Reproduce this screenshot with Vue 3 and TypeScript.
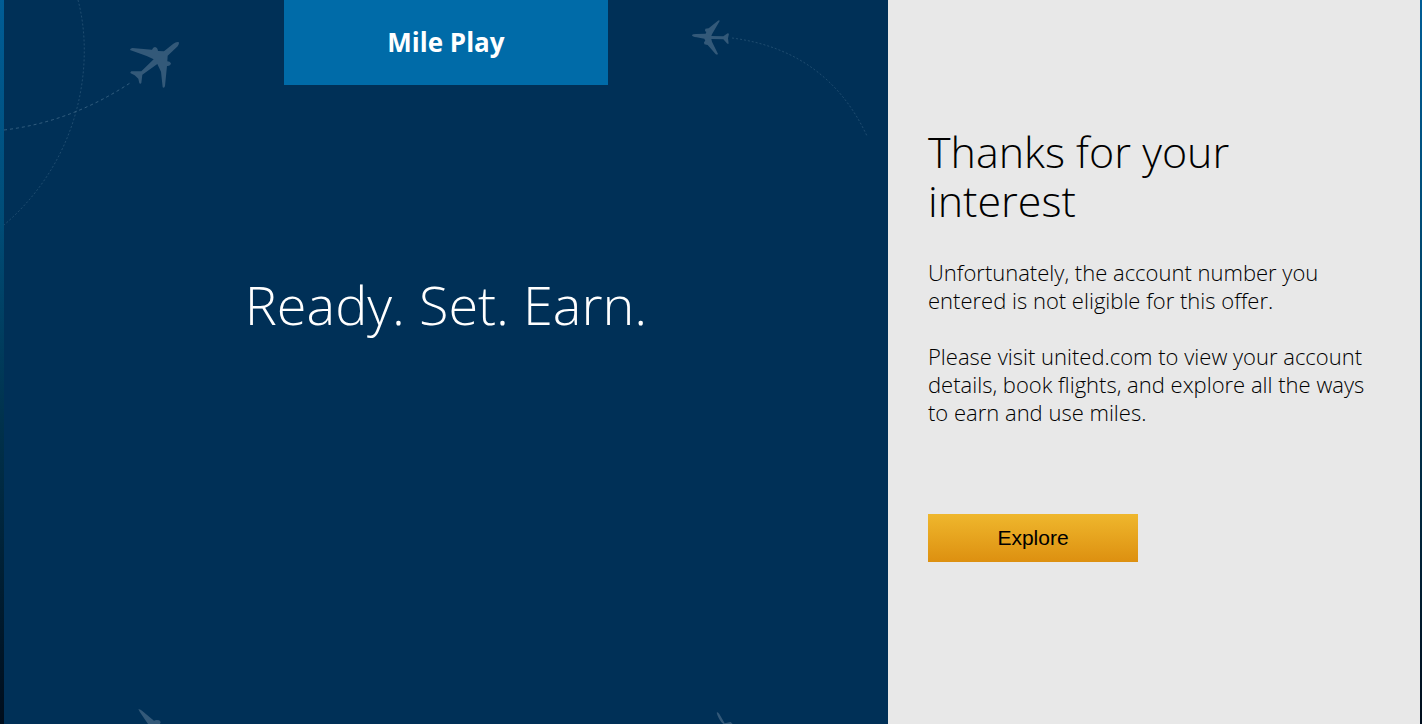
<script setup lang="ts">
const offerName: string = 'Mile Play'
const tagline: string = 'Ready. Set. Earn.'
const messages: string[] = [
  'Unfortunately, the account number you entered is not eligible for this offer.',
  'Please visit united.com to view your account details, book flights, and explore all the ways to earn and use miles.',
]
</script>

<template>
  <div class="page">
    <section class="promo">
      <svg class="sky" viewBox="0 0 884 724" preserveAspectRatio="xMidYMid slice" aria-hidden="true">
        <g class="trails">
          <path class="strong" d="M0 130 Q67 122 126 83" />
          <path d="M74 0 C90 60 79 157 0 225" />
          <path d="M728 38 C790 46 836 78 863 136" />
        </g>
        <g class="planes">
          <path transform="translate(-4 0) scale(.33333)" d="M537 127Q530 124 520 131L492 154L474 153Q473 142 465 141Q459 142 456 149L397 144Q390 146 390 150L440 168L461 178L424 214L394 214Q389 217 392 220L404 226L415 236L418 250Q422 253 424 249L427 224L472 192L483 215L488 262Q493 266 495 258L501 198Q511 199 513 190Q510 184 502 184L503 167L533 139Q538 133 537 127Z" />
          <path transform="translate(676 10) scale(.33333)" d="M36 75Q38 72 48 72L77 71L79 66L75 63L76 56L86 55L113 33Q118 29 119 33L96 73L94 78L130 79L143 70L147 71L144 85L146 101L142 101L130 88L94 87L96 95L114 132Q110 136 106 131L83 105L73 103L72 96L76 93L73 86L50 82Q37 81 36 75Z" />
          <path transform="translate(116 694) scale(.33333)" d="M55 46Q60 44 66 50L102 80Q108 76 118 79L122 84L120 90H84L60 55Z" />
          <path transform="translate(696 694) scale(.33333)" d="M50 56Q53 53 58 60L74 88L92 84L98 90H70Q56 78 50 56Z" />
        </g>
      </svg>
      <div class="badge">{{ offerName }}</div>
      <h1 class="tagline">{{ tagline }}</h1>
    </section>
    <main class="panel">
      <h2 class="heading">Thanks for your interest</h2>
      <p v-for="message in messages" :key="message" class="message">{{ message }}</p>
      <button class="explore" type="button">Explore</button>
    </main>
  </div>
</template>

<style>
body {
  margin: 0;
}
</style>

<style scoped>
.page {
  box-sizing: border-box;
  min-height: 100vh;
  padding: 0 2px 0 4px;
  display: grid;
  grid-template-columns: 884fr 532fr;
  background: linear-gradient(#005d96, #004d78 30%, #00304a 60%, #000d1c);
  font-family: "Open Sans", "Noto Sans", sans-serif;
}

.promo {
  position: relative;
  display: flex;
  flex-direction: column;
  align-items: center;
  overflow: hidden;
  background: #003057;
  color: #fff;
}

.sky {
  position: absolute;
  inset: 0;
  width: 100%;
  height: 100%;
}

.trails path {
  fill: none;
  stroke: #7da0b8;
  stroke-width: 1;
  stroke-dasharray: 2 2;
  opacity: 0.25;
}

.trails .strong {
  stroke-dasharray: 3 3;
  opacity: 0.4;
}

.planes {
  fill: #335979;
}

.badge {
  position: relative;
  box-sizing: border-box;
  width: 324px;
  max-width: 100%;
  padding: 24px;
  background: #006ba8;
  font-size: 26px;
  font-weight: 700;
  line-height: 37px;
  text-align: center;
}

.tagline {
  position: relative;
  margin: 182px 0 0;
  font-size: 54px;
  font-weight: 300;
  line-height: 74px;
}

.panel {
  padding: 127px 40px 40px;
  background: #e8e8e8;
  color: #000;
}

.heading {
  max-width: 400px;
  margin: 0 0 33px;
  font-size: 43px;
  font-weight: 300;
  line-height: 49px;
}

.message {
  max-width: 440px;
  margin: 0 0 28px;
  font-size: 22px;
  font-weight: 300;
  line-height: 28px;
}

.explore {
  display: block;
  width: 210px;
  height: 48px;
  margin-top: 88px;
  padding: 0;
  border: 0;
  background: linear-gradient(#efb72d, #dd9010);
  color: #000;
  font-family: "Liberation Sans", Arial, sans-serif;
  font-size: 21px;
  cursor: pointer;
}
</style>
